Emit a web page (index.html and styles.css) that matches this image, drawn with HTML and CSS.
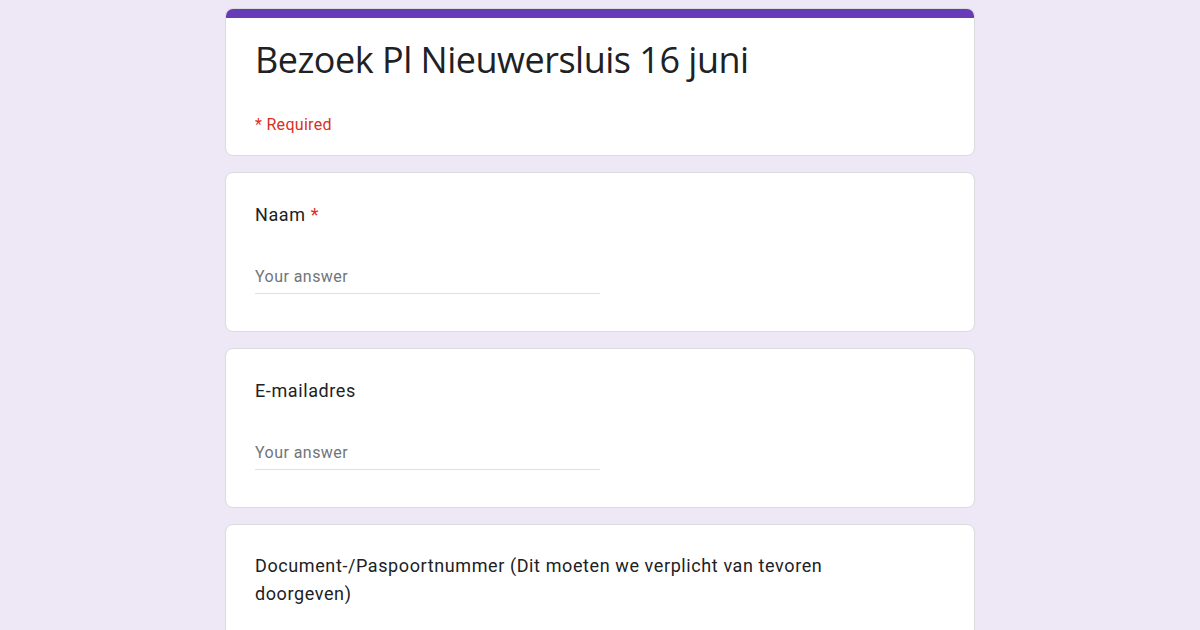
FILE: index.html
```html
<!DOCTYPE html>
<html>
<head>
<meta charset="utf-8">
<link rel="stylesheet" href="styles.css">
</head>
<body>
<main class="form">
  <section class="card header-card">
    <div class="accent"></div>
    <div class="header-body">
      <h1 class="title">Bezoek Pl Nieuwersluis 16 juni</h1>
      <div class="required-note">* Required</div>
    </div>
  </section>
  <section class="card question">
    <div class="label">Naam <span class="star">*</span></div>
    <div class="answer"><span class="placeholder">Your answer</span></div>
  </section>
  <section class="card question">
    <div class="label">E-mailadres</div>
    <div class="answer"><span class="placeholder">Your answer</span></div>
  </section>
  <section class="card question last">
    <div class="label">Document-/Paspoortnummer (Dit moeten we verplicht van tevoren doorgeven)</div>
  </section>
</main>
</body>
</html>
```
FILE: styles.css
```css
html, body {
  margin: 0;
  padding: 0;
  background: #ede7f6;
  height: 630px;
  overflow: hidden;
}
body {
  font-family: Roboto, "Liberation Sans", sans-serif;
  color: #202124;
}
.form {
  width: 750px;
  margin: 0 auto;
  padding-top: 8px;
  display: flex;
  flex-direction: column;
  gap: 16px;
}
.card {
  background: #fff;
  border: 1px solid #dadce0;
  border-radius: 8px;
  box-sizing: border-box;
  overflow: hidden;
  flex-shrink: 0;
}
.accent {
  height: 10px;
  background: #673ab7;
  margin: -1px -1px 0;
}
.header-body {
  padding: 18px 29px 20px;
}
.title {
  margin: 0;
  font-family: "Open Sans", Roboto, sans-serif;
  font-weight: 400;
  font-size: 36px;
  line-height: 48px;
  letter-spacing: -0.5px;
  color: #202124;
}
.required-note {
  margin-top: 31px;
  color: #d93025;
  font-size: 16px;
  line-height: 20px;
  letter-spacing: 0.3px;
}
.question {
  padding: 28px 29px 38px;
  height: 160px;
}
.label {
  font-size: 18px;
  line-height: 28px;
  letter-spacing: 0.6px;
  color: #202124;
  max-width: 620px;
}
.star {
  color: #d93025;
}
.answer {
  margin-top: 38px;
  width: 345px;
  border-bottom: 1px solid #e0e0e0;
  padding-bottom: 6px;
}
.placeholder {
  font-size: 16px;
  line-height: 20px;
  color: #70757a;
  letter-spacing: 0.45px;
}
.question.last {
  height: 120px;
  padding-top: 27px;
  padding-bottom: 0;
}
```
